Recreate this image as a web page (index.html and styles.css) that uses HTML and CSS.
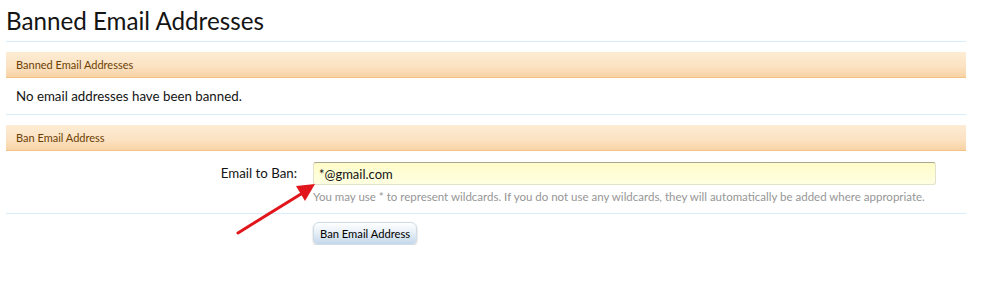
FILE: index.html
```html
<!DOCTYPE html>
<html>
<head>
<meta charset="utf-8">
<link rel="stylesheet" href="styles.css">
</head>
<body>
<div class="page">
  <h1 class="title">Banned Email Addresses</h1>
  <div class="section">
    <h3 class="bar">Banned Email Addresses</h3>
    <div class="empty">No email addresses have been banned.</div>
  </div>
  <div class="section">
    <h3 class="bar">Ban Email Address</h3>
    <div class="form-row">
      <label class="label">Email to Ban:</label>
      <div class="field">
        <div class="input">*@gmail.com</div>
        <p class="hint">You may use * to represent wildcards. If you do not use any wildcards, they will automatically be added where appropriate.</p>
      </div>
    </div>
    <div class="submit-row">
      <button class="button">Ban Email Address</button>
    </div>
  </div>
  <svg class="arrow" width="90" height="60" viewBox="0 0 90 60">
    <line x1="3" y1="53" x2="66" y2="14" stroke="#e0161c" stroke-width="3" stroke-linecap="round"/>
    <polygon points="80,4 61,6 70,21" fill="#e0161c"/>
  </svg>
</div>
</body>
</html>
```
FILE: styles.css
```css
* { box-sizing: border-box; }
body {
  margin: 0;
  background: #fff;
  font-family: "Trebuchet MS", Lato, "DejaVu Sans", sans-serif;
  color: #141414;
}
.page {
  position: relative;
  width: 960px;
  margin-left: 6px;
}
.title {
  margin: 0;
  padding: 6px 0 6px 0;
  font-size: 24.2px;
  font-weight: normal;
  line-height: 29px;
  border-bottom: 1px solid #d7edfc;
  color: #141414;
}
.section {
  margin-top: 10px;
}
.bar {
  margin: 0;
  height: 26px;
  padding: 0 10px;
  font-size: 11px;
  font-weight: normal;
  line-height: 25px;
  color: #6d3f03;
  background: linear-gradient(to bottom, #fdecd4 0%, #fbe2c2 60%, #f8d3a4 100%);
  border-bottom: 1px solid #f3c287;
}
.empty {
  padding: 10px 10px 0;
  height: 37px;
  font-size: 13.3px;
  line-height: 16px;
  border-bottom: 1px solid #d7edfc;
}
.form-row {
  display: flex;
  padding-top: 11px;
  height: 63px;
  border-bottom: 1px solid #d7edfc;
}
.label {
  width: 291px;
  text-align: right;
  font-size: 13.3px;
  line-height: 23px;
  color: #141414;
}
.field {
  margin-left: 16px;
  width: 623px;
}
.input {
  height: 23px;
  padding: 2px 5px 0;
  font-size: 13px;
  line-height: 18px;
  color: #141414;
  background: linear-gradient(to bottom, #fffcc8 0%, #ffffe2 100%);
  border: 1px solid #e2e2cc;
  border-top-color: #a8a890;
  border-radius: 3px;
}
.hint {
  margin: 5px 0 0;
  font-size: 11.5px;
  line-height: 14px;
  color: #969696;
  white-space: nowrap;
}
.submit-row {
  padding: 8px 0 0 307px;
}
.button {
  height: 23px;
  padding: 0 6px;
  white-space: nowrap;
  font-family: inherit;
  font-size: 11.2px;
  color: #000;
  background: linear-gradient(to bottom, #ffffff 0%, #eaf1f8 40%, #c4d8ea 100%);
  border: 1px solid #cfdde9;
  border-radius: 6px;
  box-shadow: 0 1px 2px rgba(0,0,0,0.25);
}
.arrow {
  position: absolute;
  left: 229px;
  top: 180px;
}
```
